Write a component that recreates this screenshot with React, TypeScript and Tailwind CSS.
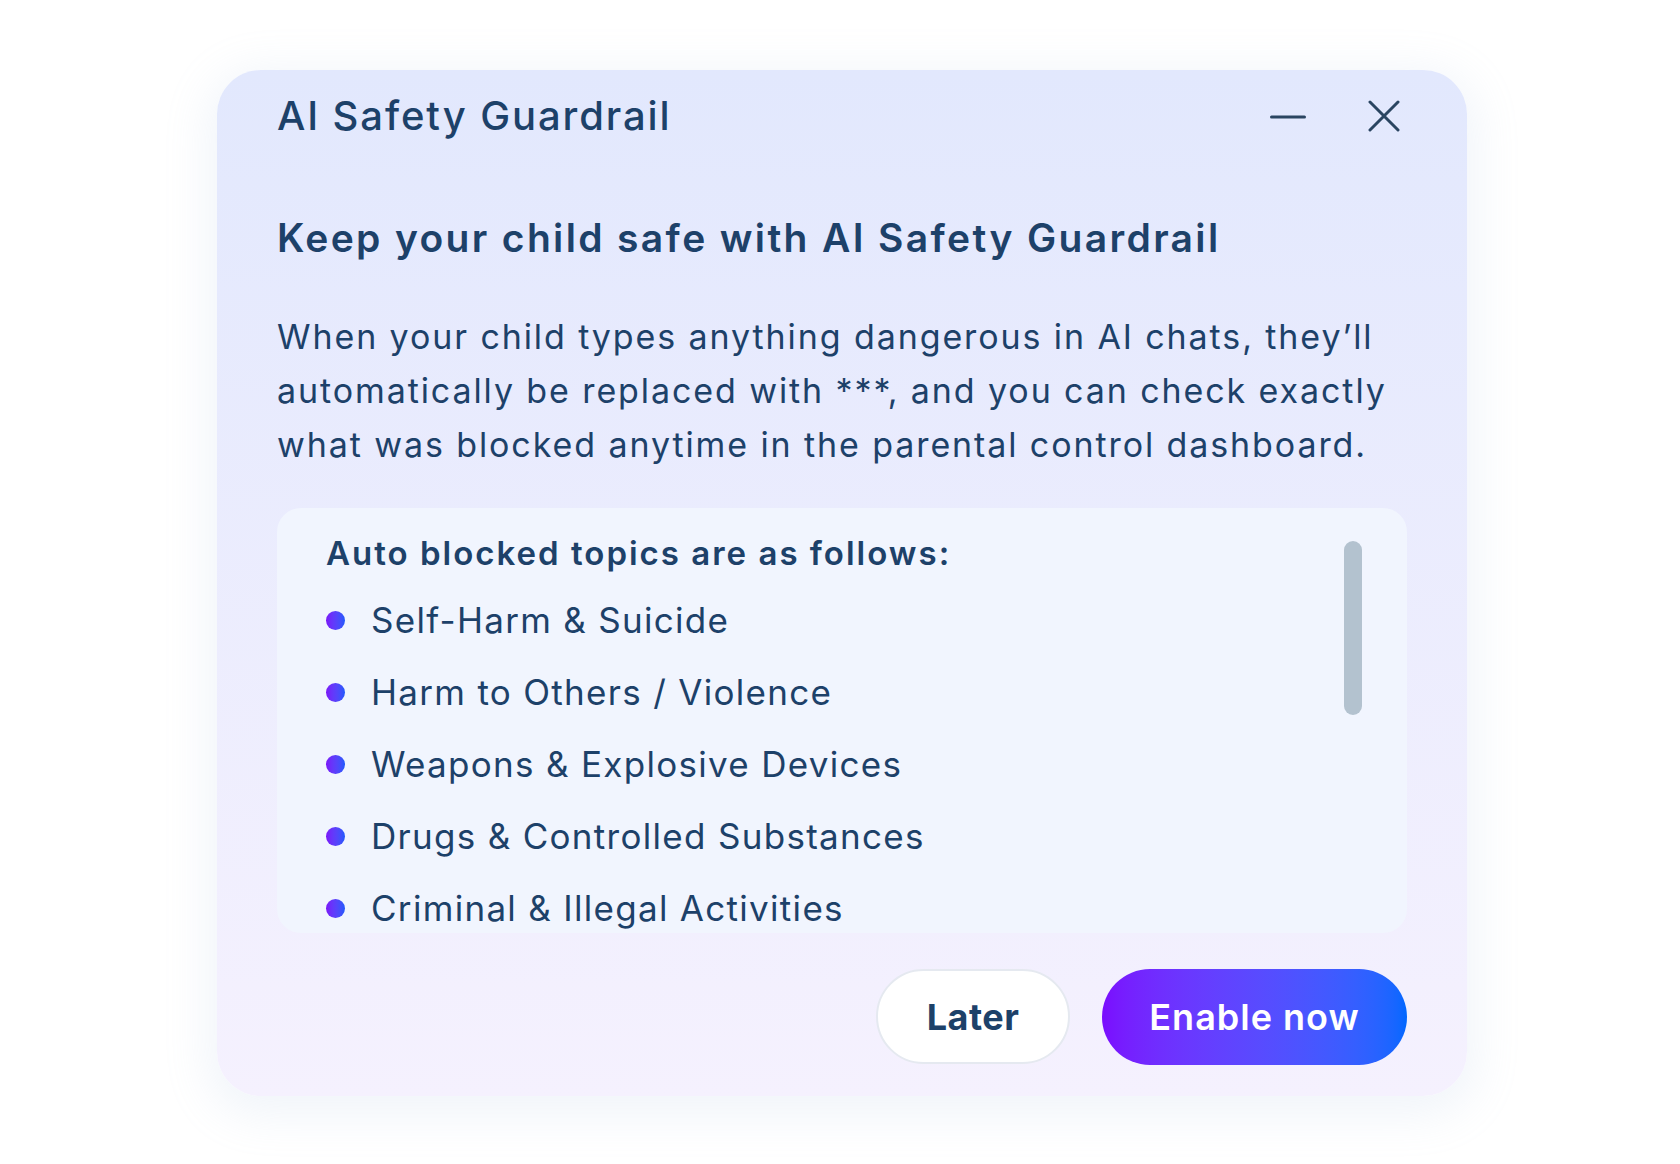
import type React from 'react'

const topics = [
  'Self-Harm & Suicide',
  'Harm to Others / Violence',
  'Weapons & Explosive Devices',
  'Drugs & Controlled Substances',
  'Criminal & Illegal Activities',
]

const App: React.FC = () => {
  return (
    <div className="min-h-screen bg-white pl-[217px] pt-[70px] font-['Inter',sans-serif] text-[#1d4169]">
      <div className="flex h-[1026px] w-[1250px] flex-col rounded-[44px] bg-linear-to-b from-[#e2e8fd] to-[#f5f1fe] px-[60px] shadow-[0_10px_44px_10px_rgba(170,190,225,0.16)]">
        {/* header */}
        <div className="mt-[22px] flex h-[48px] items-center justify-between">
          <h1 className="text-[40px] leading-[48px] font-medium tracking-[1.9px]">AI Safety Guardrail</h1>
          <div className="flex items-center gap-[62px] pr-[7px]">
            <svg width="36" height="36" viewBox="0 0 36 36" fill="none">
              <line x1="1.5" y1="19" x2="34.5" y2="19" stroke="#2a4561" strokeWidth="3" strokeLinecap="round" />
            </svg>
            <svg width="32" height="32" viewBox="0 0 32 32" fill="none">
              <path d="M2 2 L30 30 M30 2 L2 30" stroke="#2a4561" strokeWidth="3" strokeLinecap="round" />
            </svg>
          </div>
        </div>

        <h2 className="mt-[74px] text-[39px] leading-[48px] font-semibold tracking-[2.35px]">
          Keep your child safe with AI Safety Guardrail
        </h2>

        <p className="mt-[48px] text-[34px] leading-[54px] font-normal tracking-[1.9px]">
          When your child types anything dangerous in AI chats, they’ll automatically be replaced with ***, and you can
          check exactly what was blocked anytime in the parental control dashboard.
        </p>

        {/* blocked topics panel */}
        <div className="relative mt-[36px] h-[425px] overflow-hidden rounded-[24px] bg-[#f1f5fe] pl-[49px] pt-[23px]">
          <h3 className="text-[33px] leading-[44px] font-semibold tracking-[2px]">Auto blocked topics are as follows:</h3>
          <ul className="mt-[21px] flex flex-col gap-[24px]">
            {topics.map((item) => (
              <li key={item} className="flex h-[48px] items-center gap-[26px]">
                <span className="h-[19px] w-[19px] shrink-0 rounded-full bg-linear-to-r from-[#7a12f9] to-[#1c58fc]" />
                <span className="text-[35px] leading-[48px] tracking-[1.3px]">{item}</span>
              </li>
            ))}
          </ul>
          <div className="absolute right-[45px] top-[33px] h-[174px] w-[18px] rounded-full bg-[#b3c2cf]" />
        </div>

        {/* actions */}
        <div className="mt-[36px] flex justify-end gap-[32px]">
          <button className="flex h-[95px] w-[194px] items-center justify-center rounded-full border-2 border-[#e5e9f0] bg-white text-[36px] font-bold tracking-[0.5px] text-[#1d4169]">
            Later
          </button>
          <button className="flex h-[96px] w-[305px] items-center justify-center rounded-full bg-linear-to-r from-[#7a0cfe] to-[#0068ff] text-[36px] font-semibold tracking-[1px] text-white">
            Enable now
          </button>
        </div>
      </div>
    </div>
  )
}

export default App
